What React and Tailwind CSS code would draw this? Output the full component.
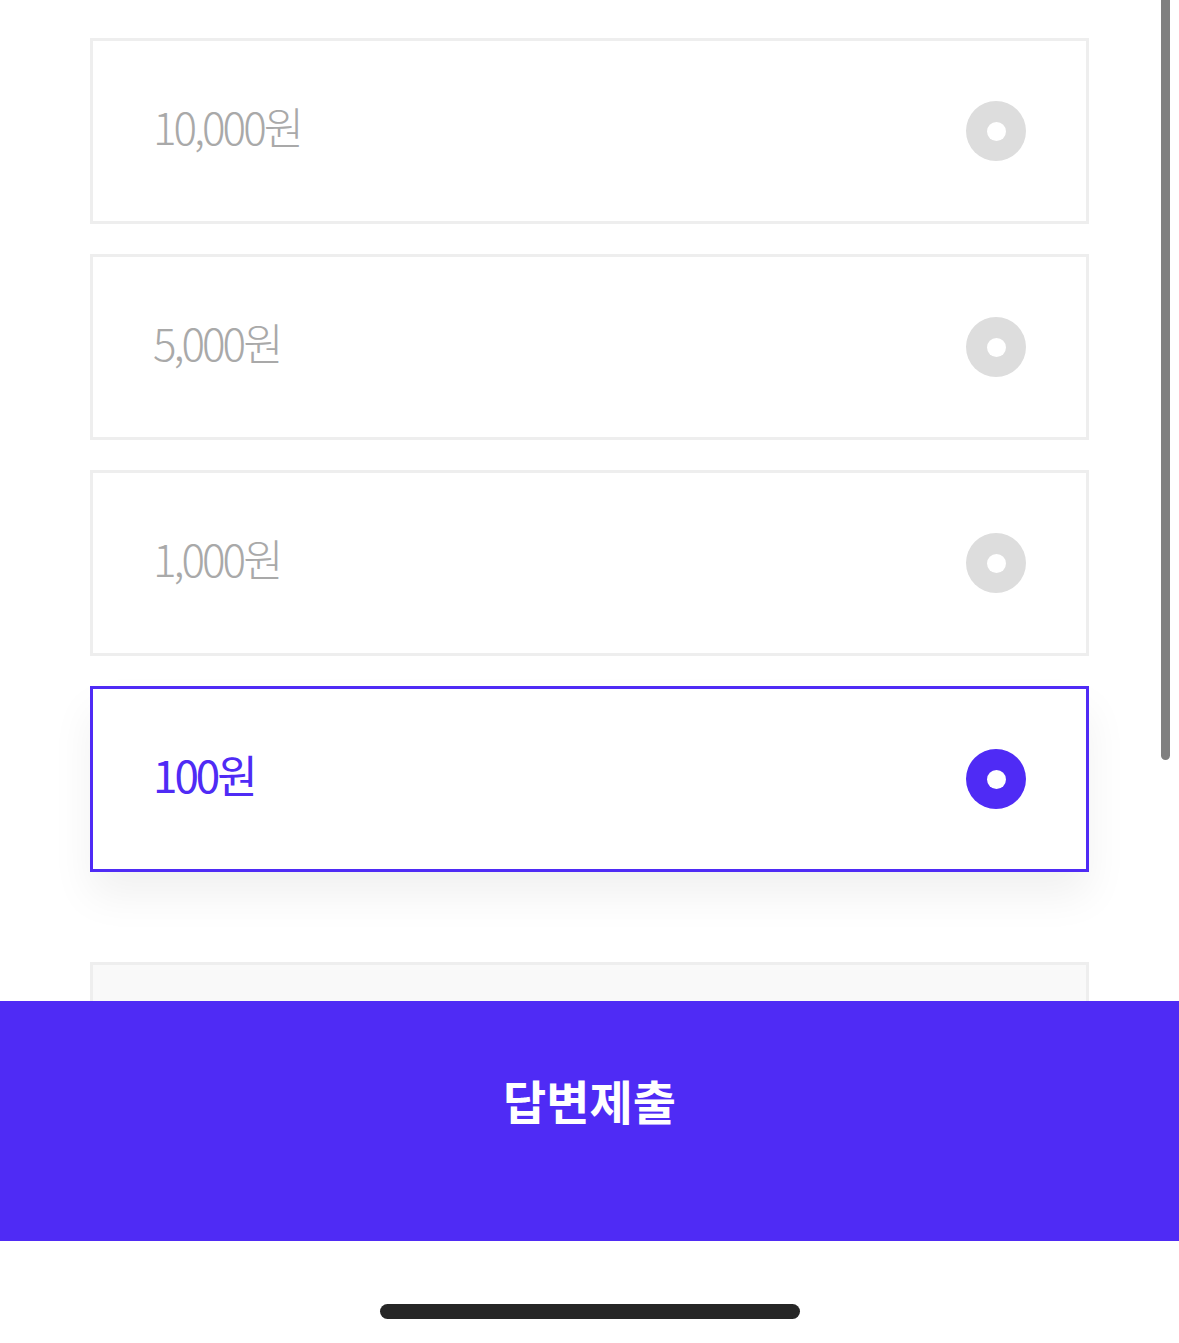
import React, { useState } from 'react';

const options = ['10,000원', '5,000원', '1,000원', '100원'];

const Radio = ({ checked }) => (
  <span
    className={`flex h-[60px] w-[60px] items-center justify-center rounded-full ${
      checked ? 'bg-[#4f2bf5]' : 'bg-[#dddddd]'
    }`}
  >
    <span className="h-[19px] w-[19px] rounded-full bg-white" />
  </span>
);

const App = () => {
  const [selected, setSelected] = useState(3);

  return (
    <div
      className="relative flex h-[1343px] w-full flex-col overflow-hidden bg-white"
      style={{ fontFamily: '"Noto Sans CJK KR", "Noto Sans", sans-serif' }}
    >
      {/* Options list */}
      <div className="h-[1001px] overflow-hidden px-[90px] pt-[38px]">
        <div className="flex flex-col gap-[30px]">
          {options.map((label, i) => {
            const checked = i === selected;
            return (
              <button
                key={label}
                type="button"
                onClick={() => setSelected(i)}
                className={`flex h-[186px] w-full items-center justify-between border-[3px] bg-white px-[60px] text-left ${
                  checked
                    ? 'border-[#4f2bf5] shadow-[0_24px_40px_rgba(0,0,0,0.06)]'
                    : 'border-[#eeeeee]'
                }`}
              >
                <span
                  className={`mb-[10px] text-[44px] leading-none tracking-[-3px] ${
                    checked ? 'font-normal text-[#4f2bf5]' : 'font-light text-[#a9a9a9]'
                  }`}
                >
                  {label}
                </span>
                <Radio checked={checked} />
              </button>
            );
          })}
        </div>
        <div className="mt-[90px] h-[186px] border-[3px] border-[#eeeeee] bg-[#f9f9f9]" />
      </div>

      {/* Submit */}
      <button
        type="button"
        className="flex h-[240px] w-full shrink-0 items-center justify-center bg-[#4f2bf5] pb-[42px] text-[47px] font-bold text-white"
      >
        답변제출
      </button>

      {/* Home indicator */}
      <div className="flex flex-1 justify-center pt-[63px]">
        <div className="h-[15px] w-[420px] rounded-full bg-[#262626]" />
      </div>

      {/* Scrollbar */}
      <div className="absolute right-[9px] top-0 h-[760px] w-[9px] rounded-b-full bg-[#808080]" />
    </div>
  );
};

export default App;
